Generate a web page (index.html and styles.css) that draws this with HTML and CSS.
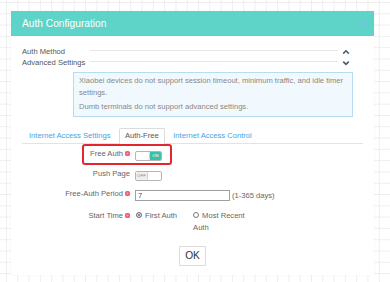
FILE: index.html
```html
<!DOCTYPE html>
<html lang="en">
<head>
    <meta charset="UTF-8">
    <meta name="viewport" content="width=device-width, initial-scale=1.0">
    <title>Auth Configuration</title>
    <link rel="stylesheet" href="styles.css">
</head>
<body>
    <div class="modal">
        <div class="modal-header">
            <span class="modal-title">Auth Configuration</span>
            <svg class="close-icon" width="8" height="8" viewBox="0 0 8 8">
                <path d="M1 1L7 7M7 1L1 7" stroke="#74c2dc" stroke-width="1.6" stroke-linecap="round"/>
            </svg>
        </div>

        <div class="modal-body">
            <!-- Collapsible sections -->
            <div class="collapse-row">
                <span class="collapse-label">Auth Method</span>
                <span class="collapse-line"></span>
                <svg class="caret" width="8" height="6" viewBox="0 0 8 6">
                    <path d="M1.2 4.6L4 1.8L6.8 4.6" fill="none" stroke="#4b5b70" stroke-width="1.6"/>
                </svg>
            </div>
            <div class="collapse-row">
                <span class="collapse-label">Advanced Settings</span>
                <span class="collapse-line"></span>
                <svg class="caret" width="8" height="6" viewBox="0 0 8 6">
                    <path d="M1.2 1.6L4 4.4L6.8 1.6" fill="none" stroke="#4b5b70" stroke-width="1.6"/>
                </svg>
            </div>

            <div class="notice">
                <p>Xiaobei devices do not support session timeout, minimum traffic, and idle timer settings.</p>
                <p>Dumb terminals do not support advanced settings.</p>
            </div>

            <!-- Tabs -->
            <ul class="tabs">
                <li>Internet Access Settings</li>
                <li class="active">Auth-Free</li>
                <li>Internet Access Control</li>
            </ul>

            <div class="form">
                <div class="form-row highlighted">
                    <span class="form-label">Free Auth<span class="info-dot"></span></span>
                    <span class="toggle on"><span class="knob"></span><span class="toggle-text">ON</span></span>
                </div>
                <div class="form-row row-push">
                    <span class="form-label">Push Page</span>
                    <span class="toggle off"><span class="toggle-text">OFF</span><span class="knob"></span></span>
                </div>
                <div class="form-row row-period">
                    <span class="form-label">Free-Auth Period<span class="info-dot"></span></span>
                    <input class="text-input" type="text" value="7">
                    <span class="suffix">(1-365 days)</span>
                </div>
                <div class="form-row row-start">
                    <span class="form-label">Start Time<span class="info-dot"></span></span>
                    <div class="radio-group">
                        <span class="radio-option"><span class="radio checked"></span>First Auth</span>
                        <span class="radio-option wrap"><span class="radio"></span>Most Recent Auth</span>
                    </div>
                </div>
            </div>

            <div class="actions">
                <button class="ok-btn">OK</button>
            </div>
        </div>
    </div>
</body>
</html>
```

FILE: styles.css
```css
/* Global Styles */
body {
    margin: 0;
    padding: 0;
    height: 282px;
    overflow: hidden;
    font-family: "Liberation Sans", Arial, sans-serif;
    background-color: #fff;
    background-image:
        linear-gradient(to right, #eeeeee 1px, transparent 1px),
        linear-gradient(to bottom, #eeeeee 1px, transparent 1px);
    background-size: 11.3px 11.3px;
    background-position: 6px 2px;
}

/* Modal */
.modal {
    width: 363px;
    height: 264px;
    margin: 11px 0 0 11px;
    background: #fff;
    box-shadow: 0 0 2px rgba(0, 0, 0, 0.06);
}

.modal-header {
    height: 25px;
    background-color: #5dd4c7;
    display: flex;
    align-items: center;
    justify-content: space-between;
    padding: 0 7px 0 11px;
}

.modal-title {
    color: #fff;
    font-size: 10.2px;
    margin-top: -1px;
}

.modal-body {
    padding: 10px 11px 0 11px;
    font-size: 7.6px;
    color: #666;
}

/* Collapsible rows */
.collapse-row {
    display: flex;
    align-items: center;
    height: 11px;
    line-height: 11px;
    color: #555;
}

.collapse-label {
    width: 68px;
}

.collapse-line {
    flex: 1;
    height: 1px;
    background: #e6e6e6;
    margin-bottom: 2px;
}

.caret {
    margin: 0 13px 0 4px;
}

/* Notice box */
.notice {
    margin: 4px 10px 0 51px;
    border: 1px solid #b6dcf2;
    background: #f1f9fe;
    padding: 2px 5px 3px;
    color: #888;
    line-height: 11.6px;
}

.notice p {
    margin: 0;
}

.notice p + p {
    margin-top: 3px;
}

/* Tabs */
.tabs {
    list-style: none;
    display: flex;
    gap: 2.5px;
    margin: 11px 0 0;
    padding: 0 0 0 1px;
    border-bottom: 1px solid #e3e3e3;
}

.tabs li {
    padding: 0 5px;
    line-height: 14px;
    border: 1px solid transparent;
    border-bottom: none;
    margin-bottom: -1px;
    padding-bottom: 1px;
    color: #4b9fe4;
}

.tabs li.active {
    border-color: #dcdcdc;
    background: #fff;
    color: #555;
    border-radius: 2px 2px 0 0;
}

/* Form */
.form-row {
    display: flex;
    align-items: flex-start;
    margin-top: 8px;
    position: relative;
}

.form-row.highlighted {
    margin-top: 5px;
}

.form-row.highlighted::after {
    content: "";
    position: absolute;
    left: 59.5px;
    top: -5px;
    width: 86px;
    height: 17.5px;
    border: 2px solid #e2262b;
    border-radius: 3px;
}

.form-label {
    width: 108px;
    text-align: right;
    line-height: 10px;
    margin-right: 5px;
    color: #666;
}

.info-dot {
    display: inline-block;
    width: 5px;
    height: 5px;
    border-radius: 50%;
    background: #f2586e;
    margin-left: 2px;
    vertical-align: 0;
    box-shadow: inset 0 0 0 1.4px #f2586e, inset 0 0 0 3px #f8a3b0;
}

/* Toggle */
.toggle {
    display: flex;
    width: 27px;
    height: 10px;
    margin-top: 2px;
    border: 1px solid #b5b5b5;
    border-radius: 2px;
    box-sizing: border-box;
    overflow: hidden;
}

.toggle .knob {
    width: 13px;
    background: #fff;
    border-radius: 2px;
}

.toggle.on .knob {
    border-right: 1px solid #cfcfcf;
}

.toggle.off .knob {
    border-left: 1px solid #cfcfcf;
}

.toggle-text {
    flex: 1;
    font-size: 4.4px;
    line-height: 8px;
    text-align: center;
}

.toggle.on .toggle-text {
    background: #3dbea6;
    color: #fff;
}

.toggle.off .toggle-text {
    background: #efefef;
    color: #888;
}

/* Text input */
.text-input {
    width: 95px;
    height: 11px;
    margin: 1px 0 0;
    padding: 0 2px;
    box-sizing: border-box;
    border: 1px solid #a0a0a0;
    font-family: inherit;
    font-size: 7.6px;
    color: #555;
    outline: none;
}

.suffix {
    margin-left: 2px;
    margin-top: 1px;
    line-height: 11px;
}

/* Radios */
.row-start {
    margin-top: 9px;
}

.row-start .form-label {
    line-height: 12px;
}

.radio-group {
    display: flex;
    gap: 16px;
    margin-left: 1px;
    line-height: 12px;
}

.radio-option.wrap {
    width: 56px;
}

.radio {
    display: inline-block;
    width: 6px;
    height: 6px;
    box-sizing: border-box;
    border: 1px solid #777;
    border-radius: 50%;
    margin-right: 3px;
    vertical-align: -0.5px;
    background: #fff;
}

.radio.checked {
    background: #666;
    box-shadow: inset 0 0 0 1px #fff;
}

/* Actions */
.actions {
    display: flex;
    justify-content: center;
    margin-top: 12px;
}

.ok-btn {
    height: 20px;
    padding: 0 5px;
    border: 1px solid #dcdcdc;
    background: #fff;
    font-family: inherit;
    font-size: 10.2px;
    color: #333;
    cursor: pointer;
}
```
